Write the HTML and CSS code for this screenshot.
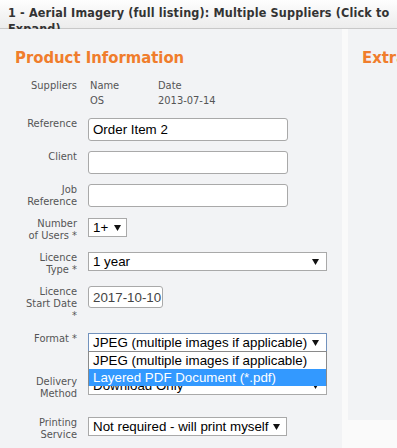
FILE: index.html
```html
<!DOCTYPE html>
<html lang="en">
<head>
<meta charset="utf-8">
<title>Aerial Imagery</title>
<link rel="stylesheet" href="styles.css">
</head>
<body>
<div class="header">1 - Aerial Imagery (full listing): Multiple Suppliers (Click to Expand)</div>
<div class="main">
  <section class="panel panel-product">
    <h2 class="panel-title">Product Information</h2>
    <div class="form">
      <div class="row row-suppliers">
        <div class="label">Suppliers</div>
        <div class="suppliers">
          <span>Name</span><span>Date</span>
          <span>OS</span><span>2013-07-14</span>
        </div>
      </div>
      <div class="row">
        <div class="label">Reference</div>
        <div class="input input-wide">Order Item 2</div>
      </div>
      <div class="row">
        <div class="label">Client</div>
        <div class="input input-wide"></div>
      </div>
      <div class="row">
        <div class="label">Job<br>Reference</div>
        <div class="input input-wide"></div>
      </div>
      <div class="row">
        <div class="label">Number<br>of Users *</div>
        <div class="select select-small"><span>1+</span><svg class="caret" width="7" height="6" viewBox="0 0 7 6"><path d="M0 0H7L3.5 6Z"/></svg></div>
      </div>
      <div class="row">
        <div class="label">Licence<br>Type *</div>
        <div class="select select-full"><span>1 year</span><svg class="caret" width="7" height="6" viewBox="0 0 7 6"><path d="M0 0H7L3.5 6Z"/></svg></div>
      </div>
      <div class="row row-start">
        <div class="label">Licence<br>Start Date<br>*</div>
        <div class="input input-date">2017-10-10</div>
      </div>
      <div class="row row-format">
        <div class="label">Format *</div>
        <div class="select select-full select-open"><span>JPEG (multiple images if applicable)</span><svg class="caret" width="7" height="6" viewBox="0 0 7 6"><path d="M0 0H7L3.5 6Z"/></svg>
          <ul class="dropdown">
            <li>JPEG (multiple images if applicable)</li>
            <li class="selected">Layered PDF Document (*.pdf)</li>
          </ul>
        </div>
      </div>
      <div class="row row-delivery">
        <div class="label">Delivery<br>Method</div>
        <div class="select select-full"><span>Download Only</span><svg class="caret" width="7" height="6" viewBox="0 0 7 6"><path d="M0 0H7L3.5 6Z"/></svg></div>
      </div>
      <div class="row">
        <div class="label">Printing<br>Service</div>
        <div class="select select-print"><span>Not required - will print myself</span><svg class="caret" width="7" height="6" viewBox="0 0 7 6"><path d="M0 0H7L3.5 6Z"/></svg></div>
      </div>
    </div>
  </section>
  <section class="panel panel-extra">
    <h2 class="panel-title">Extra Information</h2>
  </section>
</div>
</body>
</html>
```
FILE: styles.css
```css
html, body {
  margin: 0;
  padding: 0;
}
body {
  background: #fafafa;
  width: 397px;
  height: 448px;
  overflow: hidden;
  font-family: "DejaVu Sans Condensed", "DejaVu Sans", sans-serif;
}
.header {
  box-sizing: border-box;
  height: 29px;
  padding: 5px 4px 0 8px;
  border-bottom: 1px solid #c8c8c8;
  background: linear-gradient(#fefefe, #ececec);
  color: #333;
  font-weight: bold;
  font-size: 12.5px;
  letter-spacing: 0.15px;
  line-height: 16px;
}
.main {
  display: flex;
  gap: 6px;
  align-items: flex-start;
  overflow: hidden;
}
.panel {
  background: #f2f3f5;
  box-sizing: border-box;
}
.panel-product {
  width: 342px;
  flex: none;
  height: 430px;
  padding: 19px 15px 0 15px;
}
.panel-extra {
  flex: 1;
  min-width: 0;
  height: 391px;
  padding: 19px 0 0 14px;
  white-space: nowrap;
  overflow: hidden;
}
.panel-title {
  margin: 0;
  font-size: 16.5px;
  line-height: 20px;
  font-weight: bold;
  color: #f07d2c;
}
.form {
  margin-top: 12px;
}
.row {
  display: flex;
  align-items: flex-start;
  gap: 11px;
  margin-bottom: 10px;
}
.row-suppliers { margin-bottom: 11px; }
.row-start { margin-bottom: 11px; }
.row-format { margin-bottom: 24px; }
.row-delivery { margin-bottom: 17px; }
.label {
  width: 62px;
  flex: none;
  text-align: right;
  font-size: 11px;
  line-height: 12px;
  color: #555;
}
.suppliers {
  display: grid;
  grid-template-columns: 68px auto;
  row-gap: 3px;
  padding-left: 2px;
  font-size: 11px;
  line-height: 12px;
  color: #555;
}
.input, .select {
  box-sizing: border-box;
  background: #fff;
  font-family: "Liberation Sans", Arial, sans-serif;
  font-size: 13.33px;
  color: #000;
  display: flex;
  align-items: center;
  padding: 0 4px;
  white-space: nowrap;
}
.input {
  height: 23px;
  border: 1px solid #a9a9a9;
  border-radius: 3px;
}
.input-wide { width: 200px; }
.input-date { width: 75px; height: 22px; color: #444; }
.select {
  height: 19px;
  border: 1px solid #a9a9a9;
  justify-content: space-between;
  padding-right: 7px;
  position: relative;
}
.select-small { width: 39px; padding-right: 5px; }
.select-full { width: 240px; }
.select-print { width: 199px; padding-right: 6px; }
.select-open { border-color: #7292bd; }
.caret { fill: #111; flex: none; }
.dropdown {
  position: absolute;
  left: -1px;
  right: -1px;
  top: 17px;
  margin: 0;
  padding: 0;
  list-style: none;
  background: #fff;
  border: 1px solid #8a8a8a;
  border-bottom: none;
  z-index: 2;
}
.dropdown li {
  height: 17px;
  line-height: 17px;
  padding: 0 4px;
  white-space: nowrap;
}
.dropdown li.selected {
  background: #3399ff;
  color: #fff;
}
```
